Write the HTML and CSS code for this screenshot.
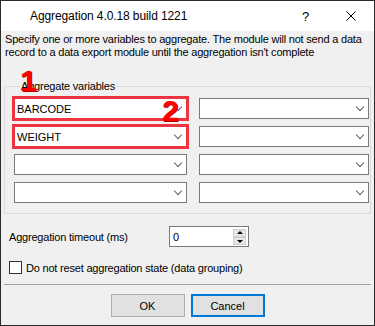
FILE: index.html
```html
<!DOCTYPE html>
<html lang="en">
<head>
  <meta charset="UTF-8">
  <title>Aggregation</title>
  <link rel="stylesheet" href="styles.css">
</head>
<body>
  <div class="window">
    <div class="titlebar">
      <span class="title">Aggregation 4.0.18 build 1221</span>
      <span class="help">?</span>
      <span class="close">
        <svg width="10" height="10" viewBox="0 0 10 10"><path d="M0.5 0.5 L9.5 9.5 M9.5 0.5 L0.5 9.5" stroke="#000" stroke-width="1" fill="none"/></svg>
      </span>
    </div>

    <div class="content">
      <p class="desc">Specify one or more variables to aggregate. The module will not send a data record to a data export module until the aggregation isn't complete</p>

      <fieldset class="group">
        <legend>Aggregate variables</legend>
        <div class="combos">
          <div class="combo marked"><span>BARCODE</span><i class="chev"></i></div>
          <div class="combo"><span></span><i class="chev"></i></div>
          <div class="combo marked"><span>WEIGHT</span><i class="chev"></i></div>
          <div class="combo"><span></span><i class="chev"></i></div>
          <div class="combo"><span></span><i class="chev"></i></div>
          <div class="combo"><span></span><i class="chev"></i></div>
          <div class="combo"><span></span><i class="chev"></i></div>
          <div class="combo"><span></span><i class="chev"></i></div>
        </div>
      </fieldset>

      <div class="timeout">
        <label class="timeout-label">Aggregation timeout (ms)</label>
        <div class="spin">
          <span class="spin-value">0</span>
          <div class="spin-buttons">
            <span class="spin-btn up"></span>
            <span class="spin-btn down"></span>
          </div>
        </div>
      </div>

      <div class="check">
        <span class="box"></span>
        <span>Do not reset aggregation state (data grouping)</span>
      </div>

      <div class="separator"></div>

      <div class="buttons">
        <button class="btn">OK</button>
        <button class="btn default">Cancel</button>
      </div>
    </div>

    <!-- annotation numbers drawn over the screenshot -->
    <span class="mark mark-1">1</span>
    <span class="mark mark-2">2</span>
  </div>
</body>
</html>
```

FILE: styles.css
```css
html, body {
  margin: 0;
  padding: 0;
}

body {
  font-family: "Liberation Sans", Arial, sans-serif;
  font-size: 11px;
  color: #000;
  background: #fff;
}

.window {
  position: relative;
  width: 375px;
  height: 326px;
  box-sizing: border-box;
  border: 1px solid #2b2b2b;
  background: #f0f0f0;
  display: flex;
  flex-direction: column;
}

.titlebar {
  height: 30px;
  background: #fff;
  display: flex;
  align-items: center;
  padding-left: 29px;
  font-size: 12px;
}

.title {
  flex: 1;
  letter-spacing: -0.1px;
}

.help {
  width: 45px;
  text-align: center;
  font-size: 13px;
}

.close {
  width: 45px;
  display: flex;
  justify-content: center;
  margin-right: 1px;
}

.content {
  padding: 0 3px;
}

.desc {
  margin: 2px 0 0 1px;
  line-height: 13px;
  letter-spacing: -0.2px;
}

.group {
  margin: 21px 0 0 0;
  padding: 5px 1px 10px 9px;
  border: 1px solid #dcdcdc;
  min-width: 0;
}

.group legend {
  padding: 0 1px;
  margin-left: 6px;
  line-height: 13px;
  letter-spacing: -0.2px;
}

.combos {
  display: grid;
  grid-template-columns: 173px 170px;
  grid-auto-rows: 21px;
  column-gap: 12px;
  row-gap: 7px;
}

.combo {
  position: relative;
  box-sizing: border-box;
  border: 1px solid #7a7a7a;
  background: #fff;
  display: flex;
  align-items: center;
  padding-left: 2px;
}

.combo span { flex: 1; }

.combo.marked {
  outline: 3px solid #ee3440;
  outline-offset: -1px;
}

.chev {
  width: 5px;
  height: 5px;
  border-right: 1px solid #606060;
  border-bottom: 1px solid #606060;
  transform: rotate(45deg);
  margin: 0 5px 3px 0;
}

.timeout {
  display: flex;
  align-items: center;
  margin-top: 12px;
  padding-left: 5px;
}

.timeout-label {
  width: 160px;
  letter-spacing: -0.2px;
}

.spin {
  width: 80px;
  height: 21px;
  box-sizing: border-box;
  border: 1px solid #7a7a7a;
  background: #fff;
  display: flex;
  align-items: center;
  padding: 0 2px 0 3px;
}

.spin-value { flex: 1; }

.spin-buttons {
  display: flex;
  flex-direction: column;
}

.spin-btn {
  width: 13px;
  height: 8px;
  box-sizing: border-box;
  background: #e6e6e6;
  border: 1px solid #cfcfcf;
  position: relative;
}

.spin-btn::after {
  content: "";
  position: absolute;
  left: 3px;
  border-left: 3px solid transparent;
  border-right: 3px solid transparent;
}

.spin-btn.up::after {
  top: 1px;
  border-bottom: 3px solid #000;
}

.spin-btn.down::after {
  top: 2px;
  border-top: 3px solid #000;
}

.check {
  display: flex;
  align-items: center;
  gap: 4px;
  margin-top: 14px;
  padding-left: 5px;
  letter-spacing: -0.2px;
}

.box {
  width: 13px;
  height: 13px;
  box-sizing: border-box;
  border: 1px solid #333;
  background: #fff;
}

.separator {
  height: 1px;
  background: #a0a0a0;
  margin-top: 10px;
}

.buttons {
  display: flex;
  justify-content: center;
  gap: 6px;
  margin-top: 9px;
}

.btn {
  width: 74px;
  height: 23px;
  box-sizing: border-box;
  border: 1px solid #adadad;
  background: #e1e1e1;
  font-family: inherit;
  font-size: 11px;
  padding: 0;
}

.btn.default {
  border: 2px solid #0078d7;
}

.mark {
  position: absolute;
  font-family: "Liberation Sans", Arial, sans-serif;
  font-weight: bold;
  font-size: 30px;
  line-height: 1;
  color: #ff0000;
  text-shadow: 1px 1px 0 #c00000;
}

.mark-1 { left: 19px; top: 65px; }
.mark-2 { left: 161px; top: 95px; }
```
